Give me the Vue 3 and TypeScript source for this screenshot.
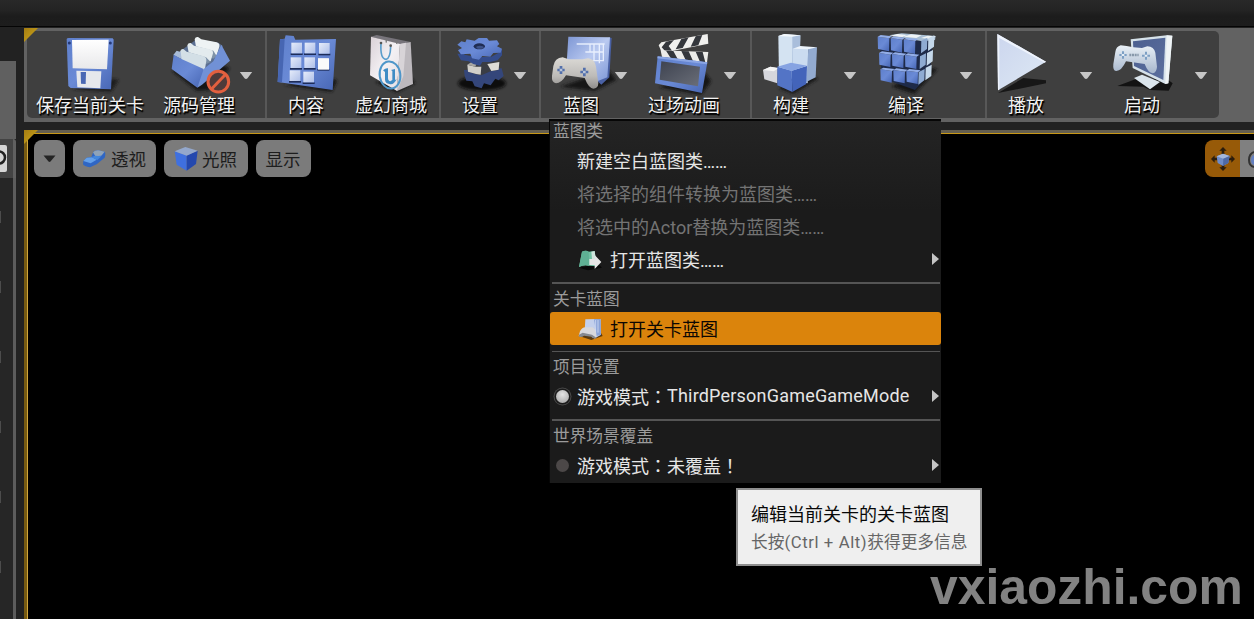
<script setup lang="ts">
interface Tool {
  label: string
  icon: string
  view: string
  lead: number
  width: number
  caretGap?: number
}

const ICON_SAVE = `
<path d="M215 268 333 276 356 240 340 236Z" fill="#1c1c1c" filter="url(#soft)"/>
<path d="M200 117Q201 114 206 114L338 115 341 119 333 268 212 264 205 258Z" fill="url(#blue)"/>
<path d="M216 120 326 119 321 208 218 205Z" fill="url(#paper)"/>
<path d="M229 212 304 214 301 265 232 262Z" fill="#e6e8ec"/>
<path d="M242 216 258 216 257 252 243 251Z" fill="#4a68b4"/>
<circle cx="208" cy="129" r="4.500" fill="#263a78"/><circle cx="331" cy="129" r="4.500" fill="#263a78"/>`

const ICON_SOURCE = `
<path d="M515 212 590 273 630 270 690 205 640 180Z" fill="#161616" filter="url(#soft)"/>
<path d="M534 158 590 118 655 128 668 138 640 200 600 220Z" fill="#5b6f92"/>
<path d="M584 118Q586 110 594 111L604 118 650 127Q660 130 658 140L650 166 628 160 588 140Z" fill="#eef3f4"/>
<path d="M588 139 640 152 650 168 640 176 586 150Z" fill="#7f93a8"/>
<path d="M562 136Q564 128 572 129L582 137 630 148Q640 151 639 160L632 184 610 180 566 158Z" fill="#e3ebee"/>
<path d="M566 157 618 172 632 186 618 192 566 168Z" fill="#7a8fa6"/>
<path d="M540 157Q542 146 550 147L560 155 610 168Q620 171 619 182L614 212 544 182Z" fill="#d3dfe6"/>
<path d="M520 165 530 152 542 156 545 178Z" fill="#a9bcd8"/>
<path d="M521 164 546 178 611 207 606 240 592 263 515 207Z" fill="url(#blue)"/>
<path d="M611 207 640 184 664 134 690 182 606 254 592 263Z" fill="#7191d6"/>
<circle cx="655" cy="245" r="31" fill="#4e3b3a" stroke="#e2603f" stroke-width="9"/>
<path d="M634 268 677 223" stroke="#e2603f" stroke-width="9"/>`

const cells = [
  [94, 68], [134, 68], [177, 69],
  [92, 112], [133, 112], [174, 115],
  [89, 151], [130, 155],
]
const ICON_CONTENT = `
<path d="M70 195 216 216 232 182 222 176Z" fill="#181818" filter="url(#soft)"/>
<path d="M60 58 74 56 77 46 101 48 106 59 228 57 218 210 53 186Z" fill="url(#blue)"/>
<path d="M60 58 74 57 66 187 53 186Z" fill="#4766b2"/>
${cells.map(([x, y]) => `<path d="M${x - 2} ${y + 32}h36v5h-36z" fill="#1d2c58"/><rect x="${x}" y="${y}" width="32" height="32" fill="url(#pale)"/>`).join('')}
<rect x="174" y="115" width="33" height="34" fill="#fafafa"/>`

const ICON_MARKET = `
<path d="M345 186 410 218 466 190 452 170Z" fill="#151515" filter="url(#soft)"/>
<path d="M333 50 350 45 452 66 436 70 420 74Z" fill="#77747b"/>
<path d="M333 50 420 72 411 213 330 166Z" fill="url(#bag)"/>
<path d="M420 72 452 66 459 192 411 213Z" fill="#bdb9be"/>
<path d="M420 72 438 68 430 168 411 213Z" fill="#d8d4d8"/>
<path d="M363 70Q360 116 378 118 391 115 392 80" fill="none" stroke="#5a9dcc" stroke-width="5"/>
<circle cx="363" cy="69" r="4" fill="#555"/><circle cx="392" cy="77" r="4" fill="#555"/>
<path d="M378 55q2 9 0 13M408 60q4 6 2 12" stroke="#777" stroke-width="4" fill="none"/>
<ellipse cx="390" cy="165" rx="31" ry="41" fill="none" stroke="#4e96c9" stroke-width="6" transform="rotate(-8 390 165)"/>
<path d="M369 151Q378 143 384 145V174Q384 183 391 184L397 180V153L393 150 405 147V180L410 178Q400 197 388 192 376 190 375 179V156Z" fill="#3f8cc5"/>`

const ICON_SETTINGS = `
<ellipse cx="666" cy="190" rx="72" ry="22" fill="#111" filter="url(#soft)"/>
<path d="M612 150 725 145 731 168 716 181 706 176 692 196 672 190 665 205 644 199 637 184 619 182 614 168Z" fill="#34467a"/>
<path d="M620 130 640 120 700 120 719 128 716 150 692 154 664 166 648 163 624 155Z" fill="#3a3d44"/>
<path d="M622 134 646 140 664 140 662 164 648 162 624 155Z" fill="#d2d0ca"/>
<path d="M682 132 718 126 716 149 694 153Z" fill="#dedcd6"/>
<path d="M622 134 638 124 650 130 646 140Z" fill="#a8a6a2"/>
<path d="M592 84 601 88 600 101 592 101 603 121 626 124 640 132 660 137 667 126 690 126 713 121 726 106V86L716 98 694 110 650 112 614 104Z" fill="#344c8c"/>
<path d="M620 58 644 62 656 54 681 54 687 62 711 61 718 72 711 79 726 86 722 98 700 99 691 110 667 108 657 119 636 115 631 101 603 103 594 91 606 84 592 74 604 64 616 67Z" fill="url(#blue)"/>
<ellipse cx="658" cy="79" rx="17" ry="9" fill="#1f2c52"/>
<ellipse cx="660" cy="82" rx="11" ry="4.500" fill="#3d5288"/>`

const ICON_BLUEPRINT = `
<path d="M60 200 165 213 230 180 205 150Z" fill="#161616" filter="url(#soft)"/>
<path d="M206 52 215 54 208 172 184 194 168 180Z" fill="#4a61a4"/>
<path d="M85 50 210 52 202 172 166 186 80 130Z" fill="url(#sheet)"/>
<path d="M110 72h40v24M150 72h44M150 96h42M162 72v50M178 72v58M136 96h30M150 122h40M190 74v50" stroke="#edf3ff" stroke-width="4" fill="none" opacity=".9"/>
<path d="M40 138Q44 114 68 112L86 118H128L144 115Q164 116 168 140L175 190Q174 206 160 206 146 205 134 174L78 166Q64 190 48 190 34 188 36 168Z" fill="url(#pad)"/>
<path d="M52 150h22M63 138v24M121 156h24M133 143v26" stroke="#5370ac" stroke-width="8"/>
<path d="M59 150h8M129 156h8" stroke="#b9c4d8" stroke-width="7"/>`

const ICON_CINE = `
<path d="M356 202 484 225 514 184 496 160Z" fill="#141414" filter="url(#soft)"/>
<path d="M356 76 364 67 503 42 505 71 366 99Z" fill="#f0f0ee"/>
<path d="M378 65 402 60 386 78 396 92 378 96 365 82ZM424 57 446 52 428 84 407 88ZM467 49 487 45 475 76 452 80Z" fill="#34373c"/>
<path d="M362 91 505 96 501 128 366 111Z" fill="#ecece9"/>
<path d="M378 92 400 93 413 117 392 114ZM424 93 446 94 459 123 437 120ZM467 95 488 96 496 127 480 125Z" fill="#34373c"/>
<path d="M353 109 502 127 486 219 345 190Z" fill="url(#blue)"/>
<path d="M364 124 480 140 474 199 359 179Z" fill="url(#slate)"/>
<path d="M353 109 502 127 501 133 352 115Z" fill="#8ba6e4"/>`

const ICON_BUILD = `
<path d="M100 205 145 222 220 176 185 160Z" fill="#151515" filter="url(#soft)"/>
<path d="M100 48 118 42 166 46 162 180 102 170Z" fill="#d4e3f2"/>
<path d="M142 48 166 46 164 150 142 150Z" fill="#a9bedb"/>
<path d="M100 48 118 42 166 46 142 50Z" fill="#f3f8fc"/>
<path d="M143 86 190 84 188 190 145 182Z" fill="#cbdcf0"/>
<path d="M190 84 216 82 212 172 184 186Z" fill="#93abd0"/>
<path d="M143 86 166 78 216 82 190 88Z" fill="#edf4fb"/>
<path d="M54 150 76 140 98 145 97 190 58 178Z" fill="#d5d6dc"/>
<path d="M54 150 76 140 102 144 86 154Z" fill="#f4f4f4"/>
<path d="M97 140 140 152 142 216 97 196Z" fill="#5374c6"/>
<path d="M140 152 186 138 184 192 142 216Z" fill="#4364ba"/>
<path d="M97 140 138 128 186 137 140 153Z" fill="#86a3e2"/>`

const cubes = [0, 1, 2].flatMap((r) =>
  [0, 1, 2].map((c) => {
    const x = 398 + c * 39 + r * 4
    const y = 50 + r * (49 - c) + c * 4
    const h = 40 - r * 2
    return `<path d="M${x} ${y}l35 5 -1 ${h - 1} -33 -7z" fill="url(#blue)"/><path d="M${x} ${y}l9 -5 34 4 -8 6z" fill="#93aee8"/>`
  }),
)
const sideCubes = [0, 1, 2].flatMap((r) =>
  [0, 1].map((c) => {
    const x = 529 + c * 21 - r * 4
    const y = 62 + r * 47 - c * (7 + r * 3)
    return `<path d="M${x} ${y}l18 -9 -1 34 -18 13z" fill="${c ? '#c5d8ea' : '#8fabd2'}"/>`
  }),
)
const ICON_COMPILE = `
<path d="M440 200 508 222 578 148 540 140Z" fill="#121212" filter="url(#soft)"/>
<path d="M404 54 530 62 564 56 555 160 510 210 410 174Z" fill="#1e2a48"/>
<path d="M432 46 470 40 572 48 570 60 532 64Z" fill="#a9bfd4"/>
<path d="M434 48l24-6 28 3-14 6zM476 50l22-7 32 3-16 8zM528 54l20-7 24 2-12 9z" fill="#eef3f5"/>
${sideCubes.join('')}${cubes.join('')}`

const ICON_PLAY = `
<path d="M54 219 198 190V181L130 174Z" fill="#171717"/>
<path d="M52 42 198 125 54 211Z" fill="url(#play)"/>
<path d="M52 42 198 125 194 128 58 54 58 209 54 211Z" fill="#eef3fc"/>`

const ICON_LAUNCH = `
<path d="M412 198 470 176 560 176 578 190 566 212 510 210 490 200Z" fill="#131313"/>
<path d="M462 174 486 164 540 186 510 208Z" fill="#dbe5ec"/>
<path d="M452 58 560 46 577 47 565 190 556 192 458 144Z" fill="#d6e2ea"/>
<path d="M560 46 577 47 565 190 556 192Z" fill="#eff4f6"/>
<path d="M459 64 556 53 550 180 462 138Z" fill="url(#slateblue)"/>
<path d="M406 96Q408 80 422 76L440 78 460 82 486 84 502 79Q522 80 526 98L531 140Q530 158 518 160 504 158 494 132L438 124Q424 154 408 153 398 152 400 132Z" fill="url(#pad2)"/>
<path d="M418 105h22M429 94v22M486 107h24M498 95v24" stroke="#7c9fc4" stroke-width="6"/>
<path d="M425 105h8M494 107h8" stroke="#e6eef6" stroke-width="6"/>
<path d="M448 105h28" stroke="#8798aa" stroke-width="7" stroke-dasharray="6 2"/>`

const groups: { name: string; tools: Tool[] }[] = [
  { name: 'file', tools: [
    { label: '保存当前关卡', icon: ICON_SAVE, view: '162 99 216 180', lead: 0, width: 126 },
    { label: '源码管理', icon: ICON_SOURCE, view: '489 99 216 180', lead: 6, width: 80, caretGap: 0 },
  ] },
  { name: 'content', tools: [
    { label: '内容', icon: ICON_CONTENT, view: '30 39 216 180', lead: 0, width: 78 },
    { label: '虚幻商城', icon: ICON_MARKET, view: '285 39 216 180', lead: 0, width: 92 },
  ] },
  { name: 'settings', tools: [
    { label: '设置', icon: ICON_SETTINGS, view: '552 39 216 180', lead: 6, width: 66, caretGap: 0 },
  ] },
  { name: 'edit', tools: [
    { label: '蓝图', icon: ICON_BLUEPRINT, view: '15 39 216 180', lead: 7, width: 66, caretGap: 0 },
    { label: '过场动画', icon: ICON_CINE, view: '324 39 216 180', lead: 17, width: 78, caretGap: 0 },
  ] },
  { name: 'build', tools: [
    { label: '构建', icon: ICON_BUILD, view: '30 39 216 180', lead: 0, width: 78, caretGap: 13 },
    { label: '编译', icon: ICON_COMPILE, view: '375 39 216 180', lead: 13, width: 72, caretGap: 17 },
  ] },
  { name: 'play', tools: [
    { label: '播放', icon: ICON_PLAY, view: '30 39 216 180', lead: 0, width: 78, caretGap: 14 },
    { label: '启动', icon: ICON_LAUNCH, view: '378 39 216 180', lead: 13, width: 72, caretGap: 16 },
  ] },
]
</script>

<template>
  <div class="editor">
    <svg class="defs" width="0" height="0">
      <defs>
        <filter id="soft" x="-20%" y="-20%" width="140%" height="140%"><feGaussianBlur stdDeviation="4" /></filter>
        <linearGradient id="blue" x1="0" y1="0" x2="1" y2="1"><stop offset="0" stop-color="#5f80cc" /><stop offset=".5" stop-color="#6a8ad6" /><stop offset="1" stop-color="#4766b4" /></linearGradient>
        <linearGradient id="paper" x1="0" y1="0" x2="0" y2="1"><stop offset="0" stop-color="#fff" /><stop offset="1" stop-color="#e8e8ea" /></linearGradient>
        <linearGradient id="pale" x1="0" y1="0" x2="1" y2="1"><stop offset="0" stop-color="#e6ecfa" /><stop offset="1" stop-color="#aebfe8" /></linearGradient>
        <linearGradient id="bag" x1="0" y1="0" x2="1" y2="1"><stop offset="0" stop-color="#d9d0d6" /><stop offset=".5" stop-color="#f4f1f4" /><stop offset="1" stop-color="#e2dde2" /></linearGradient>
        <linearGradient id="sheet" x1="0" y1="0" x2="1" y2="1"><stop offset="0" stop-color="#7d96d4" /><stop offset=".5" stop-color="#b9c9f0" /><stop offset="1" stop-color="#7d97d6" /></linearGradient>
        <linearGradient id="pad" x1="0" y1="0" x2="0" y2="1"><stop offset="0" stop-color="#dcdad6" /><stop offset=".6" stop-color="#bdbbb8" /><stop offset="1" stop-color="#8e8c8a" /></linearGradient>
        <linearGradient id="pad2" x1="0" y1="0" x2="0" y2="1"><stop offset="0" stop-color="#e9f0f6" /><stop offset="1" stop-color="#a6b6cc" /></linearGradient>
        <linearGradient id="slate" x1="0" y1="0" x2="1" y2="1"><stop offset="0" stop-color="#3e4350" /><stop offset="1" stop-color="#6a6e78" /></linearGradient>
        <linearGradient id="slateblue" x1="0" y1="0" x2="1" y2="1"><stop offset="0" stop-color="#4b5f90" /><stop offset="1" stop-color="#5c6f9e" /></linearGradient>
        <linearGradient id="play" x1="0" y1="0" x2="1" y2="1"><stop offset="0" stop-color="#ccd6ee" /><stop offset="1" stop-color="#dde8f4" /></linearGradient>
        <linearGradient id="gold" x1="0" y1="0" x2="1" y2="1"><stop offset="0" stop-color="#a47c12" /><stop offset="1" stop-color="#d0aa1c" /></linearGradient>
      </defs>
    </svg>

    <div class="titlebar"></div>
    <div class="body">
      <aside class="side">
        <div class="side-head"></div>
        <div class="side-search">
          <div class="field">
            <svg width="7" height="27" viewBox="0 0 7 27"><circle cx="-1" cy="12.500" r="6" fill="none" stroke="#222" stroke-width="2.500" /></svg>
          </div>
        </div>
        <div class="side-list"><i v-for="n in 6" :key="n"></i></div>
      </aside>

      <main class="main">
        <div class="toolbar">
          <svg class="corner" width="14" height="14"><path d="M0 0H14L0 14Z" fill="url(#gold)" /></svg>
          <div class="tools">
            <div v-for="g in groups" :key="g.name" class="group" :class="g.name">
              <template v-for="t in g.tools" :key="t.label">
                <div class="tool" :style="{ width: t.width + 'px', marginLeft: t.lead + 'px' }">
                  <svg class="tool-icon" width="72" height="60" :viewBox="t.view"><g v-html="t.icon"></g></svg>
                  <span class="tool-label">{{ t.label }}</span>
                </div>
                <svg v-if="t.caretGap !== undefined" class="caret" :style="{ marginLeft: t.caretGap + 'px' }" width="14" height="8" viewBox="0 0 14 8">
                  <path d="M.8 0H13.200L8.500 6.200Q7 7.600 5.500 6.200Z" fill="#c6c6c6" />
                </svg>
              </template>
            </div>
          </div>
        </div>

        <div class="viewport">
          <svg class="corner" width="14" height="14"><path d="M0 0H14L0 14Z" fill="url(#gold)" /></svg>
          <div class="screen">
            <div class="view-buttons">
              <button class="vbtn arrow"><svg width="13" height="8" viewBox="0 0 13 8"><path d="M.5.500H12.500L7.500 6.500Q6.500 7.300 5.500 6.500Z" fill="#242424" /></svg></button>
              <button class="vbtn persp">
                <svg width="24" height="20" viewBox="0 0 72 60">
                  <path d="M4 36 14 26 28 24 34 8Q40 2 50 4L68 8Q72 12 68 26L44 46 24 55Q6 52 3 46Z" fill="#2f66c4" />
                  <path d="M4 36 14 26 30 25 44 32 26 43Z" fill="#63a0ea" /><path d="M33 10Q40 2 50 4L68 8 58 20 40 22Z" fill="#8fa3b8" /><path d="M28 24 40 20 58 22 46 33Z" fill="#4387dd" />
                </svg>透视
              </button>
              <button class="vbtn lit">
                <svg width="24" height="25" viewBox="0 0 72 75">
                  <path d="M2 16 38 28 38 74 8 56Z" fill="#3f70e0" /><path d="M38 28 71 14 66 54 38 74Z" fill="#2448ae" /><path d="M2 16 34 3 71 14 38 29Z" fill="#94a8cc" />
                </svg>光照
              </button>
              <button class="vbtn show">显示</button>
            </div>
            <div class="gizmos">
              <div class="gizmo active">
                <svg width="24" height="24" viewBox="0 0 72 72">
                  <path d="M36 0 47 11H40V21H32V11H25ZM36 72 47 61H40V51H32V61H25ZM0 36 11 25V32H20V40H11V47ZM72 36 61 25V32H52V40H61V47Z" fill="#2c1d0c" />
                  <path d="M17 28 36 20 56 27 52 48 36 57 20 48Z" fill="#6e8cc8" /><path d="M17 28 36 20 56 27 37 35Z" fill="#a4b7dc" /><path d="M37 35 56 27 52 48 36 57Z" fill="#4e69a6" />
                </svg>
              </div>
              <div class="gizmo next">
                <svg width="14" height="24" viewBox="0 0 14 24"><path d="M14 5Q9 7 9 13T14 20" fill="none" stroke="#333" stroke-width="2" /><path d="M14 8Q11 9 11 13T14 18Z" fill="#637fc0" /></svg>
              </div>
            </div>
          </div>
        </div>
      </main>
    </div>

    <div class="menu">
      <div class="heading first">蓝图类</div>
      <div class="item">新建空白蓝图类……</div>
      <div class="item off">将选择的组件转换为蓝图类……</div>
      <div class="item off">将选中的Actor替换为蓝图类……</div>
      <div class="item with-icon">
        <svg width="25" height="22" viewBox="0 0 75 66">
          <path d="M3 56 30 64 72 56 60 44Z" fill="#080808" />
          <path d="M12 8Q24 2 32 8L50 6 56 52 34 50Q16 46 3 54Z" fill="#6fc0a2" /><path d="M12 8Q24 2 32 8L34 50Q16 46 3 54Z" fill="#5fb094" /><path d="M40 8 50 6 53 30 42 30Z" fill="#d0e4dc" />
          <path d="M34 30H50V18L70 39 50 60V48H34Z" fill="#e4e4e4" />
        </svg>
        打开蓝图类……<b class="more"></b>
      </div>
      <div class="rule"></div>
      <div class="heading">关卡蓝图</div>
      <div class="item with-icon hot">
        <svg width="25" height="22" viewBox="0 0 75 66">
          <path d="M3 54 40 66 74 54 66 40Z" fill="#5a3a10" />
          <path d="M22 4 68 3 69 50 56 58 20 36Z" fill="#c3d0ec" /><path d="M48 4 68 3 69 50 56 54Z" fill="#8ba4d8" /><path d="M53 6V44M60 6V44" stroke="#e4ecfa" stroke-width="2" />
          <path d="M6 40Q12 28 22 28H44Q52 32 54 44L55 60Q46 64 40 54L18 50Q10 58 2 54Z" fill="#d8d8dc" /><path d="M3 50 14 44 42 50 55 59Q46 64 40 56L18 53Q10 59 2 55Z" fill="#85888f" />
        </svg>
        打开关卡蓝图
      </div>
      <div class="rule thin"></div>
      <div class="heading">项目设置</div>
      <div class="item radio on"><i></i>游戏模式<span class="wide">：</span><span class="latin">ThirdPersonGameGameMode</span><b class="more"></b></div>
      <div class="rule"></div>
      <div class="heading">世界场景覆盖</div>
      <div class="item radio"><i></i>游戏模式<span class="wide">：</span>未覆盖<span class="wide">！</span><b class="more"></b></div>
    </div>

    <div class="tooltip">
      <div class="tip-title">编辑当前关卡的关卡蓝图</div>
      <div class="tip-sub">长按<span class="keys">(Ctrl + Alt)</span>获得更多信息</div>
    </div>

    <div class="watermark">vxiaozhi.com</div>
  </div>
</template>

<style>
body { background: #222; overflow: hidden; }
</style>

<style scoped>
.editor {
  position: relative;
  width: 1254px;
  height: 619px;
  overflow: hidden;
  display: flex;
  flex-direction: column;
  background: #222;
  font-family: Roboto, "Noto Sans CJK SC", sans-serif;
  font-size: 18px;
}
.defs { position: absolute; }
.titlebar {
  flex: none;
  height: 27px;
  box-sizing: border-box;
  background: linear-gradient(#292929 0, #242424 10px, #1c1c1c 16px, #1d1d1d);
  border-bottom: 1px solid #050505;
}
.body { flex: 1; display: flex; gap: 8px; min-height: 0; }
.side { width: 16px; display: flex; flex-direction: column; padding-top: 34px; }
.side-head { height: 78px; background: #606060; }
.side-search {
  height: 39px;
  box-sizing: border-box;
  padding-top: 6px;
  background: #434343;
  border-right: 3px solid #606060;
  border-top-right-radius: 3px;
}
.field { width: 7px; height: 27px; background: #d6d6d6; border-radius: 0 2px 2px 0; overflow: hidden; }
.field svg { display: block; }
.side-list {
  flex: 1;
  background: #262626;
  border-right: 3px solid #5c5c5c;
  display: flex;
  flex-direction: column;
  gap: 58px;
  padding-top: 33px;
}
.side-list i { width: 1px; height: 12px; flex: none; background: #4c4c4c; }
.main { flex: 1; display: flex; flex-direction: column; gap: 8px; padding-top: 1px; min-width: 0; }
.toolbar { position: relative; height: 94px; box-sizing: border-box; padding: 3px 0 4px 3px; background: #626262; }
.corner { position: absolute; left: 0; top: 0; z-index: 1; }
.tools { width: 1192px; height: 87px; display: flex; background: #3f3f3f; border-radius: 5px; }
.group { display: flex; box-sizing: border-box; }
.group + .group { border-left: 2px solid #585858; }
.file { width: 238px; }
.content { width: 174px; }
.settings { width: 100px; }
.edit { width: 211px; }
.build { width: 235px; }
.play { width: 234px; }
.tool { flex: none; display: flex; flex-direction: column; align-items: center; padding-top: 2px; }
.tool-icon { flex: none; overflow: visible; }
.tool-label {
  line-height: 25px;
  white-space: nowrap;
  color: #f2f2f2;
  text-shadow: 1px 1px 1px #000, 1px 2px 1px #000;
}
.caret { flex: none; margin-top: 41px; }
.viewport { position: relative; flex: 1; padding: 3px 0 0 3px; background: linear-gradient(90deg, #765a12 0, #765a12 3px, #655f50 3px); }
.screen {
  height: 100%;
  box-sizing: border-box;
  background: #000;
  border-top: 1px solid #c89818;
  border-left: 1px solid #d0a63c;
  display: flex;
  justify-content: space-between;
  align-items: flex-start;
  padding: 6px 0 0 6px;
}
.view-buttons { display: flex; gap: 8px; }
.vbtn {
  height: 37px;
  box-sizing: border-box;
  display: flex;
  align-items: center;
  justify-content: center;
  border: 0;
  padding: 0 1px 0 0;
  border-radius: 8px;
  background: #7b7b7b;
  color: #1d1d1d;
  font: 17.500px Roboto, "Noto Sans CJK SC", sans-serif;
}
.arrow { width: 31px; }
.persp { width: 83px; gap: 5px; }
.lit { width: 84px; gap: 4px; }
.show { width: 55px; }
.gizmos { display: flex; }
.gizmo { height: 37px; display: flex; align-items: center; justify-content: center; }
.gizmo.active { width: 35px; background: #975a08; border-radius: 8px 0 0 8px; }
.gizmo.next { width: 14px; background: #808080; }

.menu {
  position: absolute;
  left: 549px;
  top: 119px;
  width: 392px;
  height: 364px;
  box-sizing: border-box;
  border: solid #060606;
  border-width: 2px 0 0 1px;
  background: linear-gradient(#242424, #1b1b1b 90px);
}
.heading { height: 28px; line-height: 31px; padding-left: 3px; font-size: 16.700px; color: #9b9b9b; }
.heading.first { height: 23px; line-height: 22px; }
.item {
  position: relative;
  height: 33px;
  box-sizing: border-box;
  display: flex;
  align-items: center;
  padding-left: 27px;
  padding-bottom: 2px;
  color: #e6e6e6;
  white-space: nowrap;
}
.item.off { color: #747474; }
.item.with-icon { padding-left: 28px; gap: 7px; }
.item.with-icon svg { margin-top: 2px; }
.item.hot { background: #db840c; color: #0b0703; border-radius: 3px; }
.rule { height: 2px; margin: 6px 1px 0 2px; background: #555; }
.rule.thin { height: 1px; }
.more {
  position: absolute;
  right: 2px;
  top: 10px;
  border: solid transparent;
  border-width: 6.500px 0 6.500px 7px;
  border-left-color: #c4c4c4;
}
.item.radio { padding-left: 0; }
.radio i {
  width: 13px;
  height: 13px;
  margin: 2px 8.500px 0 5.500px;
  border-radius: 50%;
  background: #4c4848;
}
.radio.on i {
  background: radial-gradient(circle at 50% 35%, #e4e4e4, #a0a0a0);
  box-shadow: 0 0 0 1.500px #1b1b1b, 0 0 0 2.500px #4a4a4a;
}
.wide { font-family: "Noto Sans CJK TC", sans-serif; }
.latin { letter-spacing: .2px; }

.tooltip {
  position: absolute;
  left: 736px;
  top: 488px;
  width: 246px;
  height: 78px;
  box-sizing: border-box;
  padding: 12px 0 0 13px;
  background: #efefef;
  border: 2px solid #8e8e8e;
  white-space: nowrap;
}
.tip-title { line-height: 26px; color: #080808; }
.tip-sub { line-height: 30px; font-size: 16.700px; color: #666; }
.keys { letter-spacing: .6px; }
.watermark {
  position: absolute;
  left: 930px;
  top: 559px;
  line-height: 56px;
  font-family: "Liberation Sans", Arial, sans-serif;
  font-weight: 700;
  font-size: 49.800px;
  color: #828282;
}
</style>
